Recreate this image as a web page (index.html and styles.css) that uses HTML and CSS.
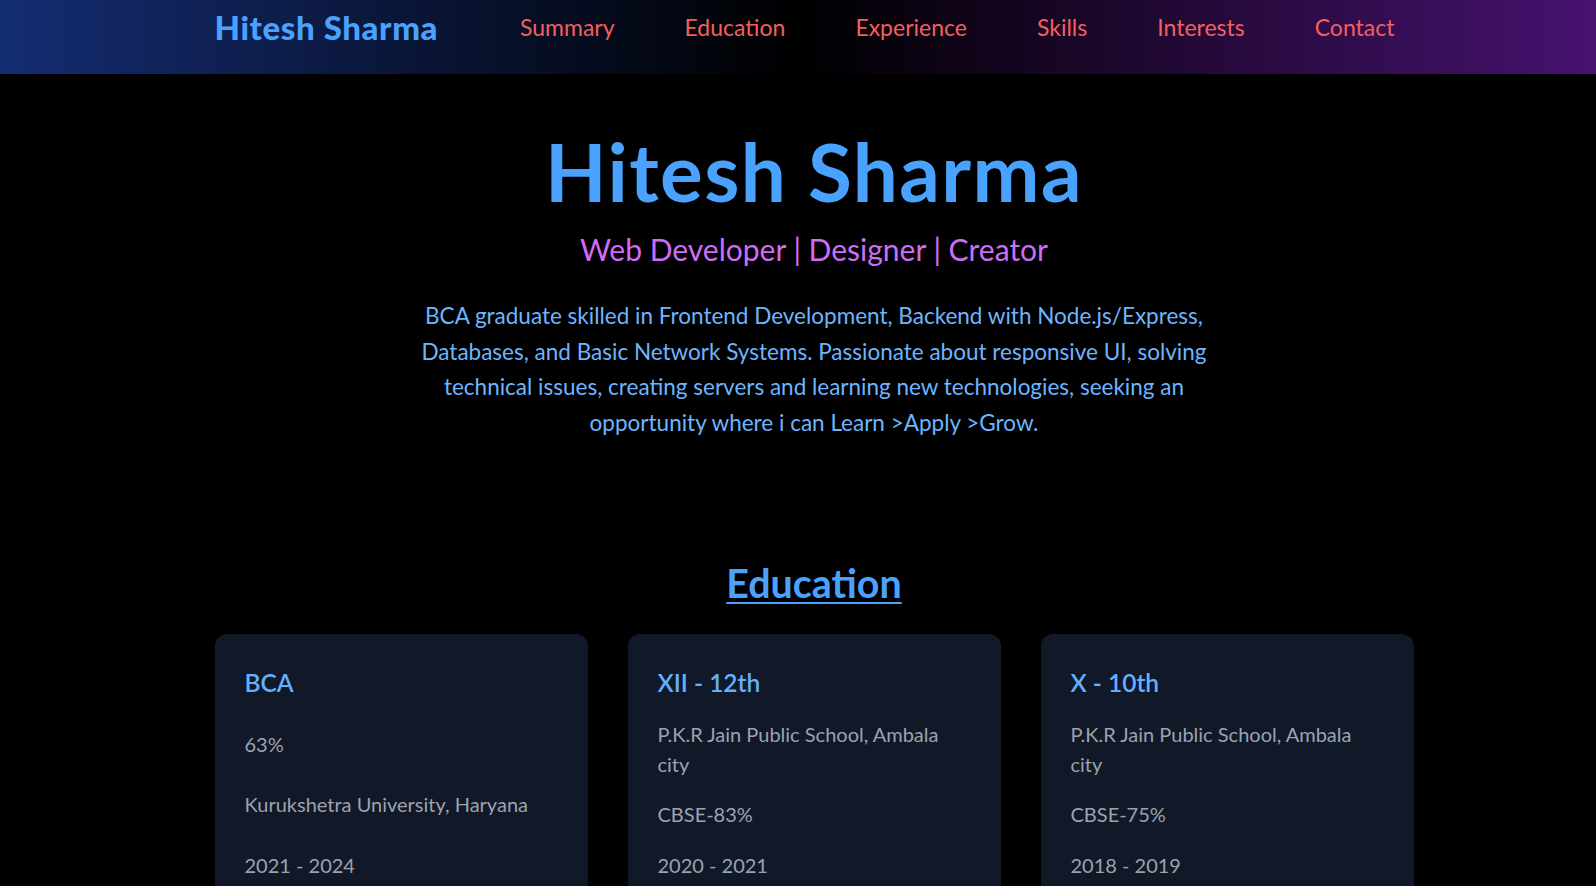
FILE: index.html
```html
<!DOCTYPE html>
<html lang="en">
<head>
<meta charset="utf-8">
<title>Hitesh Sharma</title>
<link rel="stylesheet" href="styles.css">
</head>
<body>
<header class="site-header">
  <div class="shell">
    <nav class="container nav">
      <a class="logo" href="#">Hitesh Sharma</a>
      <ul class="nav-links">
        <li><a href="#summary">Summary</a></li>
        <li><a href="#education">Education</a></li>
        <li><a href="#experience">Experience</a></li>
        <li><a href="#skills">Skills</a></li>
        <li><a href="#interests">Interests</a></li>
        <li><a href="#contact">Contact</a></li>
      </ul>
    </nav>
  </div>
</header>
<main class="shell">
  <section class="container hero" id="summary">
    <h1 class="hero-title">Hitesh Sharma</h1>
    <p class="hero-sub">Web Developer | Designer | Creator</p>
    <p class="hero-text">BCA graduate skilled in Frontend Development, Backend with Node.js/Express, Databases, and Basic Network Systems. Passionate about responsive UI, solving technical issues, creating servers and learning new technologies, seeking an opportunity where i can Learn &gt;Apply &gt;Grow.</p>
  </section>
  <section class="container education" id="education">
    <h2 class="section-title">Education</h2>
    <div class="cards">
      <article class="card">
        <h3 class="card-title">BCA</h3>
        <p class="card-text">63%</p>
        <p class="card-text">Kurukshetra University, Haryana</p>
        <p class="card-text">2021 - 2024</p>
      </article>
      <article class="card">
        <h3 class="card-title">XII - 12th</h3>
        <p class="card-text">P.K.R Jain Public School, Ambala city</p>
        <p class="card-text">CBSE-83%</p>
        <p class="card-text">2020 - 2021</p>
      </article>
      <article class="card">
        <h3 class="card-title">X - 10th</h3>
        <p class="card-text">P.K.R Jain Public School, Ambala city</p>
        <p class="card-text">CBSE-75%</p>
        <p class="card-text">2018 - 2019</p>
      </article>
    </div>
  </section>
</main>
</body>
</html>
```
FILE: styles.css
```css
* { box-sizing: border-box; }

html, body {
  margin: 0;
  padding: 0;
  background: #000;
  font-family: Lato, "Open Sans", "Liberation Sans", sans-serif;
  overflow-x: hidden;
}

.shell {
  padding-left: 32px;
}

.container {
  max-width: 1199px;
  margin: 0 auto;
}

/* Header */
.site-header {
  height: 74px;
  background: linear-gradient(90deg, #142c72 0%, #000 50%, #46126f 100%);
}

.nav {
  display: flex;
  align-items: center;
  justify-content: space-between;
  padding-top: 8px;
}

.logo {
  font-size: 33px;
  font-weight: 900;
  letter-spacing: 0.6px;
  line-height: 1.2;
  color: #4aa2ff;
  text-decoration: none;
}

.nav-links {
  display: flex;
  gap: 70px;
  list-style: none;
  margin: 0 19px 0 0;
  padding: 0;
}

.nav-links a {
  font-size: 23px;
  line-height: 1.2;
  color: #f55e5e;
  text-decoration: none;
}

/* Hero */
.hero {
  text-align: center;
  padding-top: 51px;
}

.hero-title {
  margin: 0;
  font-size: 80px;
  letter-spacing: 1.4px;
  line-height: 92px;
  font-weight: 700;
  color: #4aa2ff;
}

.hero-sub {
  margin: 14px 0 0;
  font-size: 30px;
  line-height: 1.2;
  color: #d06cf8;
}

.hero-text {
  max-width: 805px;
  margin: 31px auto 0;
  font-size: 22.5px;
  line-height: 35.5px;
  color: #6cb6ff;
}

/* Education */
.education {
  padding-top: 119px;
}

.section-title {
  margin: 0;
  text-align: center;
  font-size: 39.4px;
  line-height: 1.2;
  font-weight: 700;
  color: #4aa2ff;
  text-decoration: underline;
  text-decoration-thickness: 2px;
  text-underline-offset: 4px;
}

.cards {
  margin-top: 28px;
  display: grid;
  grid-template-columns: repeat(3, 1fr);
  gap: 40px;
}

.card {
  background: #111827;
  border-radius: 12px;
  padding: 34px 30px 30px;
  display: flex;
  flex-direction: column;
  justify-content: space-between;
  gap: 21px;
}

.card-title {
  margin: 0 0 1px;
  font-size: 24.5px;
  line-height: 30px;
  font-weight: 600;
  color: #64b0ff;
}

.card-text {
  margin: 0;
  font-size: 20px;
  line-height: 29.5px;
  color: #9ca3af;
}
```
